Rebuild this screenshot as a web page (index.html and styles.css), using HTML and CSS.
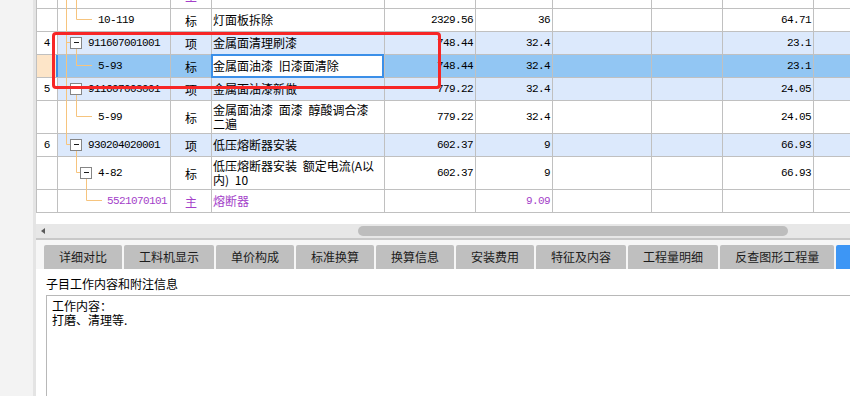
FILE: index.html
```html
<!DOCTYPE html>
<html lang="zh-CN">
<head>
<meta charset="utf-8">
<title>分部分项</title>
<link rel="stylesheet" href="styles.css">
</head>
<body>
<div class="app">
  <div class="side"></div>
  <div class="main">
    <div class="grid-wrap">
      <div class="grid">
        <div class="row mat top">
          <div class="c num"></div><div class="c code lv3"></div><div class="c type">主</div><div class="c name">成套灯具</div>
          <div class="c n"></div><div class="c n"></div><div class="c n"></div><div class="c n"></div><div class="c n"></div><div class="c n"></div>
        </div>
        <div class="row">
          <div class="c num"></div><div class="c code lv2">10-119</div><div class="c type">标</div><div class="c name">灯面板拆除</div>
          <div class="c n">2329.56</div><div class="c n">36</div><div class="c n"></div><div class="c n"></div><div class="c n">64.71</div><div class="c n"></div>
        </div>
        <div class="row item">
          <div class="c num">4</div><div class="c code lv1">911607001001</div><div class="c type">项</div><div class="c name">金属面清理刷漆</div>
          <div class="c n">748.44</div><div class="c n">32.4</div><div class="c n"></div><div class="c n"></div><div class="c n">23.1</div><div class="c n"></div>
        </div>
        <div class="row sel">
          <div class="c num"></div><div class="c code lv2">5-93</div><div class="c type">标</div><div class="c name edit">金属面油漆 旧漆面清除</div>
          <div class="c n">748.44</div><div class="c n">32.4</div><div class="c n"></div><div class="c n"></div><div class="c n">23.1</div><div class="c n"></div>
        </div>
        <div class="row item">
          <div class="c num">5</div><div class="c code lv1">911607003001</div><div class="c type">项</div><div class="c name">金属面油漆新做</div>
          <div class="c n">779.22</div><div class="c n">32.4</div><div class="c n"></div><div class="c n"></div><div class="c n">24.05</div><div class="c n"></div>
        </div>
        <div class="row tall">
          <div class="c num"></div><div class="c code lv2">5-99</div><div class="c type">标</div><div class="c name">金属面油漆 面漆 醇酸调合漆<br>二遍</div>
          <div class="c n">779.22</div><div class="c n">32.4</div><div class="c n"></div><div class="c n"></div><div class="c n">24.05</div><div class="c n"></div>
        </div>
        <div class="row item">
          <div class="c num">6</div><div class="c code lv1">930204020001</div><div class="c type">项</div><div class="c name">低压熔断器安装</div>
          <div class="c n">602.37</div><div class="c n">9</div><div class="c n"></div><div class="c n"></div><div class="c n">66.93</div><div class="c n"></div>
        </div>
        <div class="row tall">
          <div class="c num"></div><div class="c code lv2">4-82</div><div class="c type">标</div><div class="c name">低压熔断器安装 额定电流(A以<br>内) 10</div>
          <div class="c n">602.37</div><div class="c n">9</div><div class="c n"></div><div class="c n"></div><div class="c n">66.93</div><div class="c n"></div>
        </div>
        <div class="row mat">
          <div class="c num"></div><div class="c code lv3">5521070101</div><div class="c type">主</div><div class="c name">熔断器</div>
          <div class="c n"></div><div class="c n">9.09</div><div class="c n"></div><div class="c n"></div><div class="c n"></div><div class="c n"></div>
        </div>
      </div>
      <svg class="tree" width="164" height="224" viewBox="36 0 164 224">
        <g fill="none" stroke="#f6c47e" stroke-width="1">
          <path d="M66.5 0V144.5H70M66.5 42.5H70M66.5 88.5H70"/>
          <path d="M76.5 0V19.5H92M76.5 49V65.5H92M76.5 95V116.5H92M76.5 151V172.5H80M86.5 179V200.5H102"/>
        </g>
        <g fill="#fff" stroke="#858585" stroke-width="1">
          <rect x="70.5" y="37.5" width="11" height="11"/>
          <rect x="70.5" y="83.5" width="11" height="11"/>
          <rect x="70.5" y="139.5" width="11" height="11"/>
          <rect x="80.5" y="167.5" width="11" height="11"/>
        </g>
        <g stroke="#1a1a1a" stroke-width="1">
          <path d="M74 42.5H79M74 88.5H79M74 144.5H79M84 172.5H89"/>
        </g>
      </svg>
      <div class="callout"></div>
    </div>
    <div class="hscroll">
      <span class="arrow"></span>
      <span class="thumb"></span>
    </div>
    <div class="tabs">
      <div class="tab">详细对比</div>
      <div class="tab">工料机显示</div>
      <div class="tab">单价构成</div>
      <div class="tab">标准换算</div>
      <div class="tab">换算信息</div>
      <div class="tab">安装费用</div>
      <div class="tab">特征及内容</div>
      <div class="tab">工程量明细</div>
      <div class="tab">反查图形工程量</div>
      <div class="tab active">说明</div>
    </div>
    <div class="panel">
      <div class="panel-title">子目工作内容和附注信息</div>
      <div class="memo">工作内容：<br>打磨、清理等.</div>
    </div>
  </div>
</div>
</body>
</html>
```

FILE: styles.css
```css
* { box-sizing: border-box; margin: 0; padding: 0; }
html, body { width: 850px; height: 396px; overflow: hidden; background: #fff; }
body {
  font-family: "Noto Sans CJK SC", "Noto Sans", sans-serif;
  font-size: 12px;
  color: #000;
}
.app { display: flex; height: 396px; }
.side {
  width: 36px;
  flex: none;
  background: #f3f3f3;
  border-right: 3px solid #e4e4e4;
}
.main {
  flex: 1;
  min-width: 0;
  display: flex;
  flex-direction: column;
  overflow: hidden;
}
.grid-wrap {
  position: relative;
  height: 224px;
  flex: none;
  overflow: hidden;
}
.grid {
  width: max-content;
  margin-top: -14px;
  border-left: 1px solid #c0c0c0;
}
.row {
  display: grid;
  grid-template-columns: 21px 113px 41px 173px 91px 77px 99px 71px 91px 120px;
  height: 23px;
  border-bottom: 1px solid #c0c0c0;
}
.row.tall { height: 33px; }
.row.top .c { align-items: flex-start; padding-top: 1px; }
.c {
  display: flex;
  align-items: center;
  border-right: 1px solid #c0c0c0;
  white-space: nowrap;
  overflow: hidden;
}
.num {
  justify-content: center;
  font-family: "Liberation Mono", monospace;
  font-size: 11px;
}
.code {
  font-family: "Liberation Mono", monospace;
  font-size: 11px;
  letter-spacing: -0.6px;
}
.lv1 { padding-left: 30px; }
.lv2 { padding-left: 40px; }
.lv3 { padding-left: 49px; }
.type { justify-content: center; }
.name {
  padding-left: 1px;
  line-height: 14px;
  word-spacing: 3px;
}
.n {
  justify-content: flex-end;
  padding-right: 2px;
  font-family: "Liberation Mono", monospace;
  font-size: 11px;
  letter-spacing: -0.6px;
}
.mat .c { color: #a43fc9; }
.item .c:not(.num) { background: #dce9fc; }
.sel .c { background: #92c6f3; }
.sel .num {
  background: #fde5c8;
  border-right-color: #3b8fe8;
  box-shadow: inset -1px 0 #3b8fe8;
}
.sel .edit {
  position: relative;
  overflow: visible;
  background: #fff;
}
.sel .edit::after {
  content: "";
  position: absolute;
  left: -1px;
  top: -1px;
  right: 0;
  bottom: -1px;
  border: 2px solid #3b8fe8;
}
.tree {
  position: absolute;
  left: 0;
  top: 0;
  pointer-events: none;
}
.callout {
  position: absolute;
  left: 16px;
  top: 32px;
  width: 389px;
  height: 57px;
  border: 3px solid #f72626;
  border-radius: 4px;
}
.hscroll {
  height: 16px;
  flex: none;
  display: flex;
  align-items: center;
  background: #e7e7e7;
  border-bottom: 2px solid #c8c8c8;
}
.arrow {
  width: 0;
  height: 0;
  margin-left: 5px;
  border-top: 3px solid transparent;
  border-bottom: 3px solid transparent;
  border-right: 4px solid #5a5a5a;
}
.thumb {
  width: 430px;
  height: 10px;
  margin-left: 313px;
  border-radius: 5px;
  background: #bdbdbd;
}
.tabs {
  display: flex;
  gap: 2px;
  height: 29px;
  flex: none;
  padding: 5px 0 0 8px;
  background: #f6f6f6;
  overflow: hidden;
}
.tab {
  flex: none;
  height: 24px;
  line-height: 24px;
  padding: 0 15px;
  background: #bfbfbf;
  border-radius: 2px 2px 0 0;
  color: #1c1c1c;
  white-space: nowrap;
}
.tab.active { background: #3d96f5; color: #fff; }
.panel {
  flex: 1;
  padding: 7px 0 0 10px;
  background: #fff;
  overflow: hidden;
}
.panel-title { line-height: 16px; }
.memo {
  margin-top: 3px;
  height: 140px;
  padding: 3px 0 0 5px;
  line-height: 14px;
  border: 1px solid #b8b8b8;
  border-right: none;
}
```
